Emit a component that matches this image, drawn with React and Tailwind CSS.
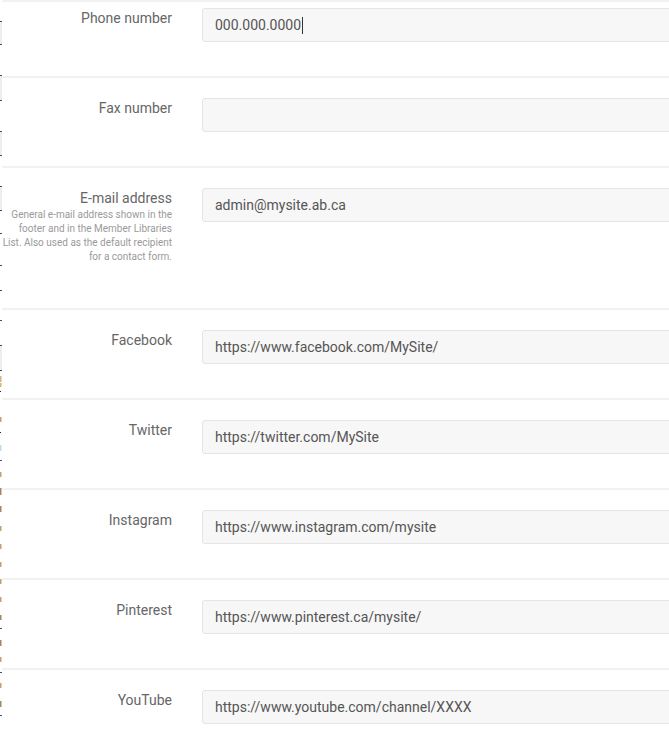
import React from "react";

const rows = [
  { label: "Fax number", value: "" },
  {
    label: "E-mail address",
    desc: "General e-mail address shown in the footer and in the Member Libraries List. Also used as the default recipient for a contact form.",
    value: "admin@mysite.ab.ca",
  },
  { label: "Facebook", value: "https://www.facebook.com/MySite/" },
  { label: "Twitter", value: "https://twitter.com/MySite" },
  { label: "Instagram", value: "https://www.instagram.com/mysite" },
  { label: "Pinterest", value: "https://www.pinterest.ca/mysite/" },
  { label: "YouTube", value: "https://www.youtube.com/channel/XXXX" },
];

function Strip() {
  const ticks = [21, 44, 75, 100, 131, 155, 186, 210, 233, 265, 290, 320, 345, 370, 460, 628, 672, 715];
  const boxes = [[21, 23], [76, 24], [131, 24], [186, 24], [345, 25]];
  const icons = [
    [376, 6, "#c9a15a"], [383, 4, "#c9a15a"], [417, 5, "#b08850"], [445, 6, "#a9d6ee"],
    [472, 5, "#b08850"], [488, 7, "#8b6a3a"], [506, 6, "#8b6a3a"], [526, 5, "#b08850"],
    [544, 5, "#b08850"], [562, 5, "#b08850"], [579, 5, "#b08850"], [597, 5, "#b08850"],
    [615, 5, "#8b6a3a"], [640, 6, "#8b6a3a"], [657, 5, "#b08850"], [683, 5, "#b08850"],
    [701, 6, "#8b6a3a"],
  ];
  const dots = [391, 432];
  return (
    <svg width="2" height="751" viewBox="0 0 2 751" className="block shrink-0">
      {boxes.map(([y, h]) => (
        <rect key={"b" + y} x="0" y={y} width="2" height={h} fill="#ededed" />
      ))}
      {ticks.map((y) => (
        <rect key={"t" + y} x="0" y={y} width="2" height="1" fill="#47478a" />
      ))}
      {icons.map(([y, h, c]) => (
        <rect key={"i" + y} x="0" y={y} width="1.5" height={h} fill={c} opacity="0.8" />
      ))}
      {dots.map((y) => (
        <rect key={"d" + y} x="0" y={y} width="1" height="1" fill="#222" />
      ))}
    </svg>
  );
}

function Input({ value, cursor }) {
  return (
    <div className="w-[520px] shrink-0 h-[34px] bg-[#f7f7f7] border border-[#e4e4e4] rounded-[3px] pl-[12px] flex items-center text-[14px] text-[#555555]">
      <span>{value}</span>
      {cursor && <span className="inline-block w-px h-[17px] bg-[#333] ml-px" />}
    </div>
  );
}

export default function App() {
  return (
    <div
      className="w-[669px] h-[751px] overflow-hidden bg-white flex"
      style={{ fontFamily: "Roboto, 'Noto Sans', sans-serif" }}
    >
      <Strip />
      <div className="flex-1 min-w-0 overflow-hidden border-t-2 border-[#f2f2f2]">
        <div className="flex pt-[6px] pb-[34px] border-b-2 border-[#f2f2f2]">
          <div className="w-[170px] shrink-0 text-right text-[14px] leading-[20px] text-[#666666]">
            Phone number
          </div>
          <div className="w-[30px] shrink-0" />
          <Input value="000.000.0000" cursor />
        </div>
        {rows.map((r) => (
          <div key={r.label} className="flex pt-[20px] pb-[34px] border-b-2 border-[#f2f2f2]">
            <div className="w-[170px] shrink-0 text-right">
              <div className="text-[14px] leading-[20px] text-[#666666]">{r.label}</div>
              {r.desc && (
                <div className="text-[10px] leading-[14px] text-[#9a9a9a] mb-[10px] -ml-[2px]">
                  {r.desc}
                </div>
              )}
            </div>
            <div className="w-[30px] shrink-0" />
            <Input value={r.value} />
          </div>
        ))}
      </div>
    </div>
  );
}
